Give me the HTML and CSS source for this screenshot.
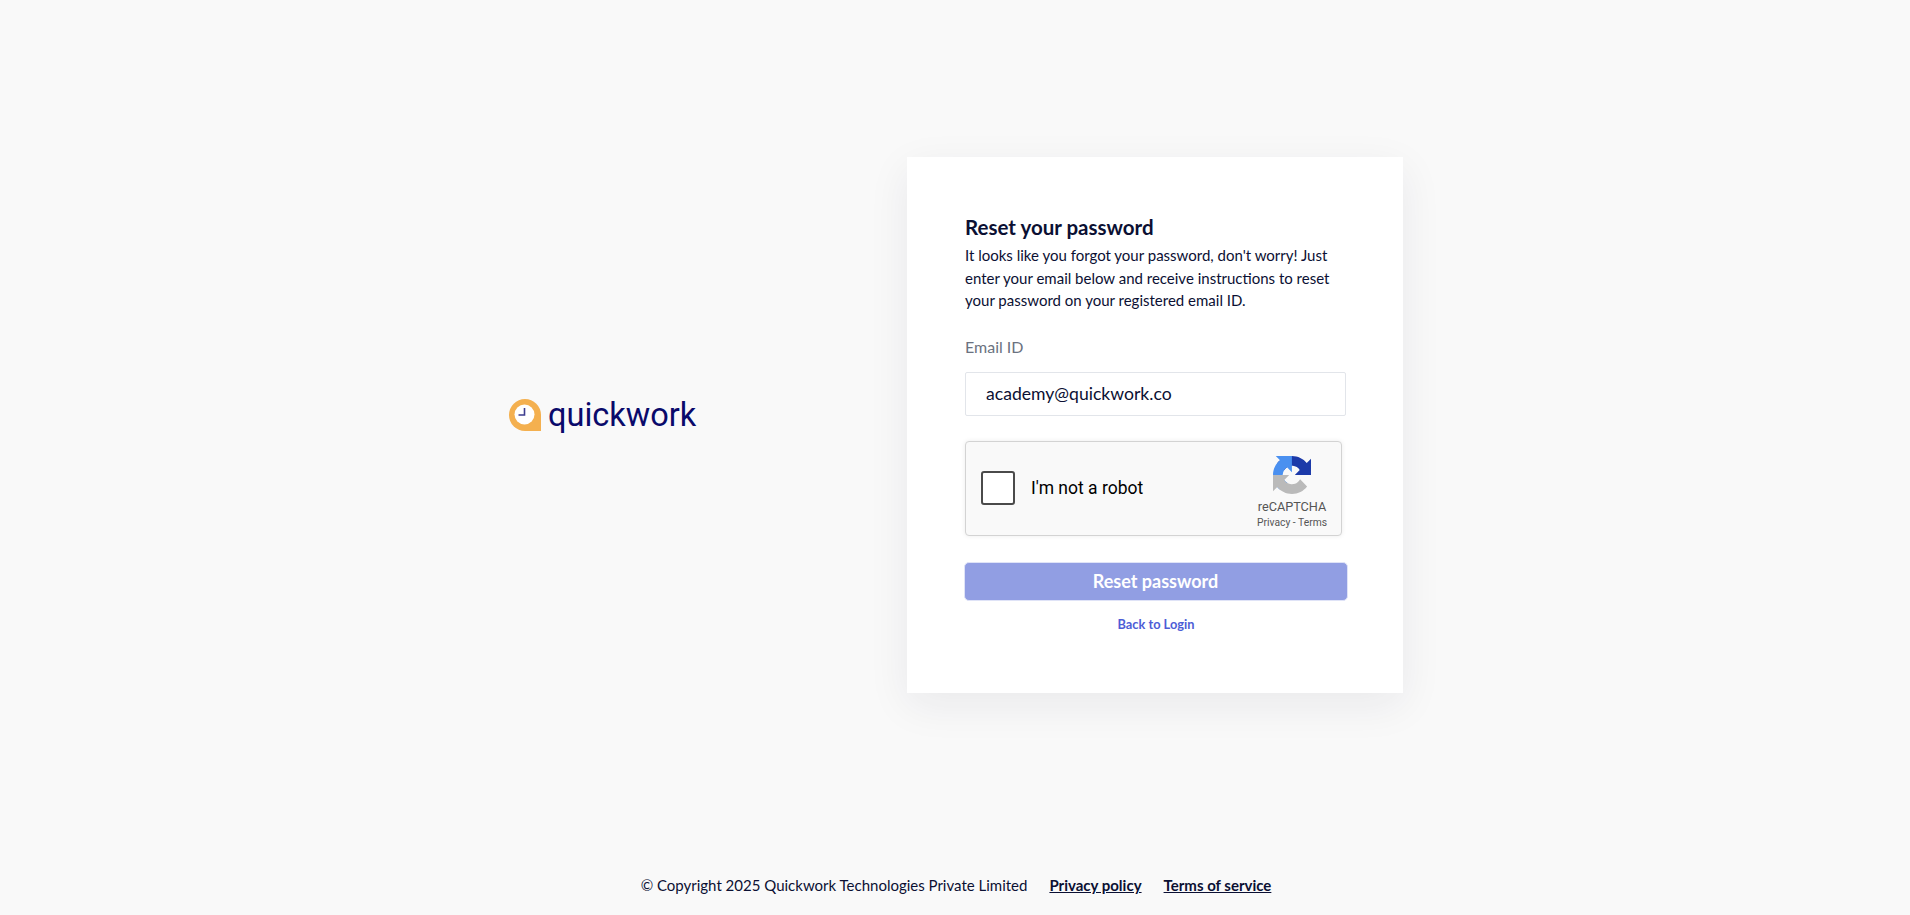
FILE: index.html
```html
<!DOCTYPE html>
<html lang="en">
<head>
<meta charset="utf-8">
<title>Reset your password</title>
<link rel="stylesheet" href="styles.css">
</head>
<body>
<main class="main">
  <div class="logo">
    <svg class="logo-mark" viewBox="0 0 32 32" aria-hidden="true">
      <path class="pin" d="M16 0a16 16 0 0 1 16 16v16H16A16 16 0 0 1 16 0z"/>
      <circle class="dial" cx="15.5" cy="15.5" r="10"/>
      <path class="hands" d="M15.5 9v7H9.5"/>
    </svg>
    <span class="logo-text">quickwork</span>
  </div>
  <section class="card">
    <h1 class="title">Reset your password</h1>
    <p class="intro">It looks like you forgot your password, don't worry! Just<br>enter your email below and receive instructions to reset<br>your password on your registered email ID.</p>
    <label class="label" for="email">Email ID</label>
    <div class="input" id="email">academy@quickwork.co</div>
    <div class="captcha">
      <div class="check"></div>
      <span class="robot">I'm not a robot</span>
      <div class="badge">
        <svg class="badge-logo" viewBox="0 0 64 64" aria-hidden="true">
          <path fill="#1c3aa9" d="M64 31.955l-.033-1.37V4.687l-7.16 7.16C50.948 4.674 42.033.093 32.05.093 21.66.093 12.427 5.05 6.59 12.73l11.736 11.86a15.55 15.55 0 0 1 4.754-5.334c2.05-1.6 4.952-2.906 8.97-2.906.485 0 .86.057 1.136.163 4.976.393 9.288 3.14 11.828 7.124l-8.307 8.307c10.522-.04 22.4-.066 27.295.005"/>
          <path fill="#4a90f0" d="M31.9.002l-1.37.033H4.64l7.16 7.16C4.626 13.054.045 21.97.045 31.95c0 10.39 4.957 19.622 12.637 25.46l11.86-11.736a15.55 15.55 0 0 1-5.334-4.754c-1.6-2.05-2.906-4.952-2.906-8.97 0-.485.057-.86.163-1.136.393-4.976 3.14-9.288 7.124-11.828l8.307 8.307c-.04-10.522-.066-22.4.005-27.295"/>
          <path fill="#bababa" d="M.002 31.953l.033 1.37v25.9l7.16-7.16c5.86 7.173 14.775 11.754 24.757 11.754 10.39 0 19.622-4.957 25.46-12.637L45.675 39.32a15.55 15.55 0 0 1-4.754 5.334c-2.05 1.6-4.952 2.906-8.97 2.906-.485 0-.86-.057-1.136-.163-4.976-.393-9.288-3.14-11.828-7.124l8.307-8.307c-10.522.04-22.4.066-27.295-.005"/>
        </svg>
        <span class="badge-name">reCAPTCHA</span>
        <span class="badge-links">Privacy - Terms</span>
      </div>
    </div>
    <button class="submit" type="button">Reset password</button>
    <a class="back" href="#">Back to Login</a>
  </section>
</main>
<footer class="footer">
  <span class="copy">© Copyright 2025 Quickwork Technologies Private Limited</span>
  <a class="foot-link" href="#">Privacy policy</a>
  <a class="foot-link" href="#">Terms of service</a>
</footer>
</body>
</html>
```
FILE: styles.css
```css
* { box-sizing: border-box; }
html, body { margin: 0; height: 100%; }
body {
  background: #f9f9f9;
  color: #0b1033;
  font-family: "Lato", "Open Sans", sans-serif;
  display: flex;
  flex-direction: column;
  height: 915px;
  overflow: hidden;
}
.main {
  height: 850px;
  padding-left: 2px;
  display: flex;
  justify-content: center;
  align-items: center;
  gap: 211px;
}
.logo {
  display: flex;
  align-items: center;
  gap: 7px;
  width: 187px;
  margin-bottom: 20px;
}
.logo-mark { width: 32px; height: 32px; flex: none; }
.pin { fill: #f4b04f; }
.dial { fill: #fff; }
.hands { fill: none; stroke: #3d3d8f; stroke-width: 1.6; }
.logo-text {
  font-family: "Roboto", sans-serif;
  font-size: 32.5px;
  line-height: 40px;
  color: #0a0a6b;
}
.card {
  width: 496px;
  height: 536px;
  background: #fff;
  box-shadow: 0 12px 40px rgba(30, 30, 60, 0.07);
  padding: 58px 57px 0 58px;
  display: flex;
  flex-direction: column;
  align-items: flex-start;
}
.title {
  margin: 0;
  font-size: 20.5px;
  line-height: 24px;
  font-weight: 700;
}
.intro {
  margin: 5px 0 0;
  font-size: 15px;
  line-height: 22.5px;
}
.label {
  margin-top: 23px;
  font-size: 16px;
  line-height: 24px;
  color: #6b7280;
}
.input {
  margin-top: 13px;
  width: 381px;
  height: 44px;
  border: 1px solid #e2e5ea;
  border-radius: 2px;
  padding-left: 20px;
  font-size: 17.6px;
  line-height: 42px;
}
.captcha {
  margin-top: 25px;
  width: 377px;
  height: 95px;
  border: 1px solid #d3d3d3;
  border-radius: 4px;
  background: #f9f9f9;
  box-shadow: 0 0 5px rgba(0, 0, 0, 0.08);
  display: flex;
  align-items: center;
  font-family: "Roboto", sans-serif;
}
.check {
  margin-left: 15px;
  width: 34px;
  height: 34px;
  background: #fff;
  border: 2.5px solid #4a4a4a;
  border-radius: 3px;
}
.robot {
  margin-left: 16px;
  font-size: 17.5px;
  color: #000;
}
.badge {
  margin-left: auto;
  width: 74px;
  margin-right: 12px;
  padding-top: 14px;
  align-self: flex-start;
  display: flex;
  flex-direction: column;
  align-items: center;
  color: #555;
}
.badge-logo { width: 38px; height: 38px; }
.badge-name { margin-top: 5px; font-size: 12.7px; line-height: 16px; }
.badge-links { margin-top: 1px; font-size: 10.3px; line-height: 14px; white-space: nowrap; }
.submit {
  margin: 26px 0 0 -1.5px;
  width: 384px;
  height: 39px;
  background: #919ee3;
  border: 1px solid #dfe3f7;
  border-radius: 5px;
  color: #fff;
  font-family: inherit;
  font-size: 18px;
  font-weight: 700;
  padding: 0;
}
.back {
  align-self: center;
  margin: 15px 0 0 1px;
  font-size: 12.8px;
  line-height: 16px;
  font-weight: 700;
  color: #4d5dd6;
  text-decoration: none;
}
.footer {
  display: flex;
  justify-content: center;
  align-items: center;
  gap: 22px;
  height: 65px;
  padding-top: 5px;
  padding-left: 2px;
  font-size: 15px;
}
.foot-link {
  color: #0b1033;
  font-weight: 700;
  text-decoration: underline;
}
```
